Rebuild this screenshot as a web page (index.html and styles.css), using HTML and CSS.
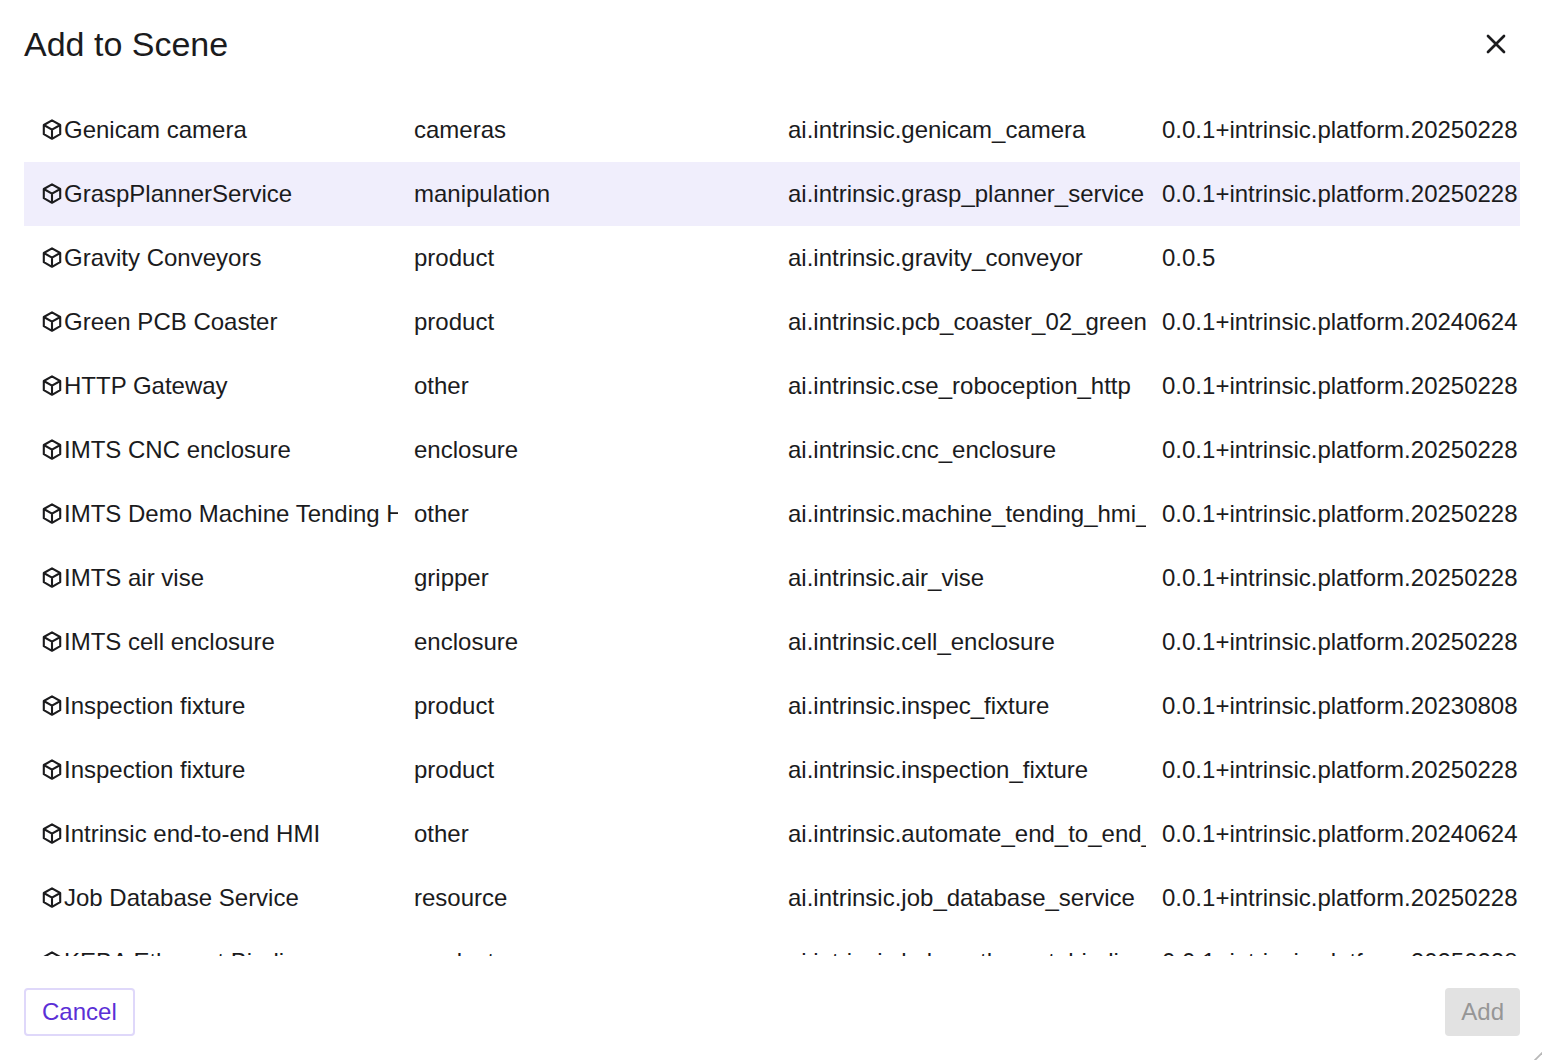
FILE: index.html
```
<!DOCTYPE html>
<html lang="en">

<head>
    <meta charset="UTF-8">
    <meta name="viewport" content="width=device-width, initial-scale=1.0">
    <title>Add to Scene</title>
    <link rel="stylesheet" href="styles.css">
</head>

<body>
    <svg class="sprite" aria-hidden="true">
        <symbol id="cube" viewBox="0 0 24 24">
            <path d="M12 2.4L20.2 7V16.2L12 20.8L3.8 16.2V7ZM3.8 7L12 11.6L20.2 7M12 11.6V20.8" />
        </symbol>
    </svg>

    <div class="dialog" role="dialog" aria-labelledby="dialogTitle">
        <div class="dialog-header">
            <h1 id="dialogTitle">Add to Scene</h1>
            <button class="close-btn" type="button" aria-label="Close">
                <svg viewBox="0 0 24 24"><path d="M4 4L20 20M20 4L4 20" /></svg>
            </button>
        </div>

        <div class="asset-list">
            <table class="assets">
                <tbody>
                    <tr>
                        <td><span class="name"><svg class="icon"><use href="#cube" /></svg>Genicam camera</span></td>
                        <td>cameras</td>
                        <td>ai.intrinsic.genicam_camera</td>
                        <td>0.0.1+intrinsic.platform.20250228</td>
                    </tr>
                    <tr class="active">
                        <td><span class="name"><svg class="icon"><use href="#cube" /></svg>GraspPlannerService</span></td>
                        <td>manipulation</td>
                        <td>ai.intrinsic.grasp_planner_service</td>
                        <td>0.0.1+intrinsic.platform.20250228</td>
                    </tr>
                    <tr>
                        <td><span class="name"><svg class="icon"><use href="#cube" /></svg>Gravity Conveyors</span></td>
                        <td>product</td>
                        <td>ai.intrinsic.gravity_conveyor</td>
                        <td>0.0.5</td>
                    </tr>
                    <tr>
                        <td><span class="name"><svg class="icon"><use href="#cube" /></svg>Green PCB Coaster</span></td>
                        <td>product</td>
                        <td>ai.intrinsic.pcb_coaster_02_green</td>
                        <td>0.0.1+intrinsic.platform.20240624</td>
                    </tr>
                    <tr>
                        <td><span class="name"><svg class="icon"><use href="#cube" /></svg>HTTP Gateway</span></td>
                        <td>other</td>
                        <td>ai.intrinsic.cse_roboception_http</td>
                        <td>0.0.1+intrinsic.platform.20250228</td>
                    </tr>
                    <tr>
                        <td><span class="name"><svg class="icon"><use href="#cube" /></svg>IMTS CNC enclosure</span></td>
                        <td>enclosure</td>
                        <td>ai.intrinsic.cnc_enclosure</td>
                        <td>0.0.1+intrinsic.platform.20250228</td>
                    </tr>
                    <tr>
                        <td><span class="name"><svg class="icon"><use href="#cube" /></svg>IMTS Demo Machine Tending HMI</span></td>
                        <td>other</td>
                        <td>ai.intrinsic.machine_tending_hmi_</td>
                        <td>0.0.1+intrinsic.platform.20250228</td>
                    </tr>
                    <tr>
                        <td><span class="name"><svg class="icon"><use href="#cube" /></svg>IMTS air vise</span></td>
                        <td>gripper</td>
                        <td>ai.intrinsic.air_vise</td>
                        <td>0.0.1+intrinsic.platform.20250228</td>
                    </tr>
                    <tr>
                        <td><span class="name"><svg class="icon"><use href="#cube" /></svg>IMTS cell enclosure</span></td>
                        <td>enclosure</td>
                        <td>ai.intrinsic.cell_enclosure</td>
                        <td>0.0.1+intrinsic.platform.20250228</td>
                    </tr>
                    <tr>
                        <td><span class="name"><svg class="icon"><use href="#cube" /></svg>Inspection fixture</span></td>
                        <td>product</td>
                        <td>ai.intrinsic.inspec_fixture</td>
                        <td>0.0.1+intrinsic.platform.20230808</td>
                    </tr>
                    <tr>
                        <td><span class="name"><svg class="icon"><use href="#cube" /></svg>Inspection fixture</span></td>
                        <td>product</td>
                        <td>ai.intrinsic.inspection_fixture</td>
                        <td>0.0.1+intrinsic.platform.20250228</td>
                    </tr>
                    <tr>
                        <td><span class="name"><svg class="icon"><use href="#cube" /></svg>Intrinsic end-to-end HMI</span></td>
                        <td>other</td>
                        <td>ai.intrinsic.automate_end_to_end_</td>
                        <td>0.0.1+intrinsic.platform.20240624</td>
                    </tr>
                    <tr>
                        <td><span class="name"><svg class="icon"><use href="#cube" /></svg>Job Database Service</span></td>
                        <td>resource</td>
                        <td>ai.intrinsic.job_database_service</td>
                        <td>0.0.1+intrinsic.platform.20250228</td>
                    </tr>
                    <tr>
                        <td><span class="name"><svg class="icon"><use href="#cube" /></svg>KEBA Ethernet Binding</span></td>
                        <td>product</td>
                        <td>ai.intrinsic.keba_ethernet_binding</td>
                        <td>0.0.1+intrinsic.platform.20250228</td>
                    </tr>
                </tbody>
            </table>
        </div>

        <div class="dialog-footer">
            <button class="btn btn-secondary" type="button">Cancel</button>
            <button class="btn" type="button" disabled>Add</button>
        </div>

        <svg class="resize-handle" viewBox="0 0 8 8" aria-hidden="true"><path d="M0 9L9 0" /></svg>
    </div>
</body>

</html>
```

FILE: styles.css
```
* {
    margin: 0;
    padding: 0;
    box-sizing: border-box;
}

body {
    font-family: "Liberation Sans", Arial, sans-serif;
    font-size: 24px;
    line-height: 32px;
    color: #1b1b1d;
    background-color: #fff;
}

.sprite {
    display: none;
}

.dialog {
    position: relative;
    display: flex;
    flex-direction: column;
    height: 100vh;
}

.dialog-header {
    display: flex;
    justify-content: space-between;
    align-items: center;
    padding: 20px 22px 30px 24px;
}

.dialog-header h1 {
    font-size: 34px;
    line-height: 48px;
    font-weight: normal;
}

.close-btn {
    display: flex;
    justify-content: center;
    align-items: center;
    width: 48px;
    height: 48px;
    border: none;
    background: none;
    cursor: pointer;
}

.close-btn svg {
    width: 24px;
    height: 24px;
    fill: none;
    stroke: #1b1b1d;
    stroke-width: 2.7;
    stroke-linecap: round;
}

.asset-list {
    flex: 1;
    min-height: 0;
    margin: 0 22px 0 24px;
    overflow-y: auto;
    scrollbar-width: none;
}

.assets {
    width: 100%;
    table-layout: fixed;
    border-collapse: collapse;
}

/* long names and ids are cut off at the edge of the column */
.assets td {
    height: 64px;
    padding-left: 16px;
    white-space: nowrap;
    overflow: hidden;
}

.assets tr {
    cursor: pointer;
}

.assets tr:hover,
.assets .active {
    background-color: #f0eefc;
}

.name {
    display: flex;
    align-items: center;
    overflow: hidden;
}

.icon {
    flex: none;
    width: 24px;
    height: 24px;
    fill: none;
    stroke: currentColor;
    stroke-width: 2.1;
    stroke-linejoin: round;
}

.dialog-footer {
    display: flex;
    justify-content: space-between;
    padding: 32px 22px 24px 24px;
}

.btn {
    height: 48px;
    padding: 0 16px;
    border: none;
    border-radius: 4px;
    font: inherit;
    color: #fff;
    background-color: #5b2fd6;
    cursor: pointer;
}

.btn:disabled {
    color: #969696;
    background-color: #e2e2e2;
    cursor: default;
}

.btn-secondary {
    border: 2px solid #dfd8fa;
    color: #5b2fd6;
    background-color: #fff;
}

.resize-handle {
    position: absolute;
    right: 0;
    bottom: 0;
    width: 8px;
    height: 8px;
    fill: none;
    stroke: #b8b8b8;
    stroke-width: 1.8;
}
```
